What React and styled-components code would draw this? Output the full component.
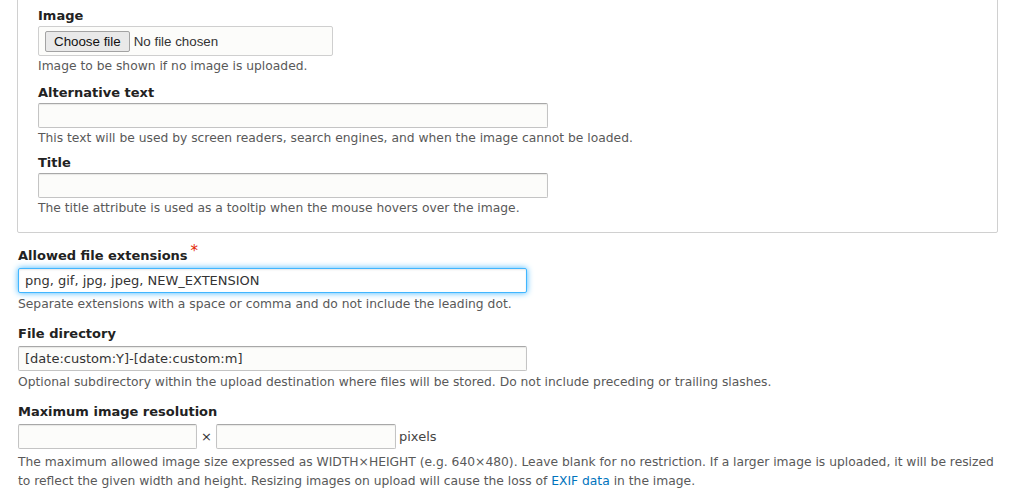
import React from "react";
import styled, { createGlobalStyle, css } from "styled-components";

const GlobalStyle = createGlobalStyle`
  html, body {
    margin: 0;
    padding: 0;
    background: #fff;
  }
  body {
    font-family: "DejaVu Sans", "Noto Sans", sans-serif;
    font-size: 13px;
    color: #222;
    overflow: hidden;
  }
`;

const Page = styled.div`
  padding: 0 14px 0 17px;
`;

const Fieldset = styled.fieldset`
  margin: -26px 0 13px;
  padding: 32px 20px 14px;
  border: 1px solid #d0d0d0;
  border-radius: 2px;
  min-width: 0;
`;

const Item = styled.div`
  margin-bottom: ${(p) => (p.$tight ? "6px" : "11px")};
  padding-left: ${(p) => (p.$tight ? "0" : "1px")};

  &:first-child {
    margin-bottom: ${(p) => (p.$tight ? "8px" : "11px")};
  }

  &:last-child {
    margin-bottom: 0;
  }
`;

const Label = styled.label`
  display: block;
  font-weight: bold;
  font-size: 13px;
  line-height: 18px;
  color: #222;
  margin-bottom: ${(p) => (p.$tight ? "1px" : "3px")};
`;

const Required = styled.span`
  color: #e32700;
  font-weight: normal;
  font-size: 15px;
  position: relative;
  top: -4px;
  margin-left: 3px;
`;

const TextInput = styled.input`
  display: block;
  box-sizing: border-box;
  width: ${(p) => p.$width || 509}px;
  height: 25px;
  margin: 0;
  padding: 0 6px;
  font-family: "DejaVu Sans", sans-serif;
  font-size: 13px;
  color: #333;
  background: #fcfcfa;
  border: 1px solid #c4c4c4;
  border-top-color: #a8a8a8;
  border-radius: 2px;
  box-shadow: inset 0 1px 1px rgba(0, 0, 0, 0.08);
  outline: none;

  ${(p) =>
    p.$focused &&
    css`
      background: #fff;
      border-color: #40b6ff;
      box-shadow: inset 0 1px 2px rgba(0, 0, 0, 0.1), 0 0 6px #40b6ff;
    `}
`;

const FileBox = styled.label`
  display: flex;
  align-items: center;
  box-sizing: border-box;
  width: 295px;
  height: 30px;
  margin: 1px 0;
  padding: 0 6px;
  font-family: "Liberation Sans", Arial, sans-serif;
  font-size: 13.33px;
  color: #333;
  background: #fcfcfa;
  border: 1px solid #cfcfcf;
  border-radius: 2px;
  cursor: pointer;
`;

const HiddenFile = styled.input`
  display: none;
`;

const FileButton = styled.span`
  display: inline-flex;
  align-items: center;
  box-sizing: border-box;
  height: 21px;
  padding: 0 8px;
  margin-right: 4px;
  color: #111;
  background: #e9e9e9;
  border: 1px solid #a3a3a3;
  border-radius: 2px;
`;

const Description = styled.div`
  font-size: 12.3px;
  line-height: 19px;
  color: #595959;
  margin-top: ${(p) => (p.$tight ? "1px" : "2px")};
`;

const Link = styled.a`
  color: #0074bd;
  text-decoration: none;
`;

const Inline = styled.div`
  display: flex;
  align-items: center;
  padding-bottom: 2px;
`;

const Times = styled.span`
  width: 19px;
  text-align: center;
  font-size: 13px;
  color: #333;
`;

const Suffix = styled.span`
  margin-left: 3px;
  font-size: 13px;
  color: #444;
`;

function Field({ label, required, tight, description, children }) {
  return (
    <Item $tight={tight}>
      <Label $tight={tight}>
        {label}
        {required && <Required>*</Required>}
      </Label>
      {children}
      <Description $tight={tight}>{description}</Description>
    </Item>
  );
}

export default function App() {
  return (
    <Page>
      <GlobalStyle />
      <Fieldset>
        <Field tight label="Image" description="Image to be shown if no image is uploaded.">
          <FileBox>
            <HiddenFile type="file" />
            <FileButton>Choose file</FileButton>
            No file chosen
          </FileBox>
        </Field>
        <Field
          tight
          label="Alternative text"
          description="This text will be used by screen readers, search engines, and when the image cannot be loaded."
        >
          <TextInput type="text" $width={510} />
        </Field>
        <Field
          tight
          label="Title"
          description="The title attribute is used as a tooltip when the mouse hovers over the image."
        >
          <TextInput type="text" $width={510} />
        </Field>
      </Fieldset>

      <Field
        label="Allowed file extensions"
        required
        description="Separate extensions with a space or comma and do not include the leading dot."
      >
        <TextInput type="text" $focused defaultValue="png, gif, jpg, jpeg, NEW_EXTENSION" />
      </Field>

      <Field
        label="File directory"
        description="Optional subdirectory within the upload destination where files will be stored. Do not include preceding or trailing slashes."
      >
        <TextInput type="text" defaultValue="[date:custom:Y]-[date:custom:m]" />
      </Field>

      <Field
        label="Maximum image resolution"
        description={
          <>
            The maximum allowed image size expressed as WIDTH×HEIGHT (e.g. 640×480). Leave blank for no
            restriction. If a larger image is uploaded, it will be resized to reflect the given width and
            height. Resizing images on upload will cause the loss of <Link href="#">EXIF data</Link> in the
            image.
          </>
        }
      >
        <Inline>
          <TextInput type="text" $width={179} />
          <Times>×</Times>
          <TextInput type="text" $width={180} />
          <Suffix>pixels</Suffix>
        </Inline>
      </Field>
    </Page>
  );
}
